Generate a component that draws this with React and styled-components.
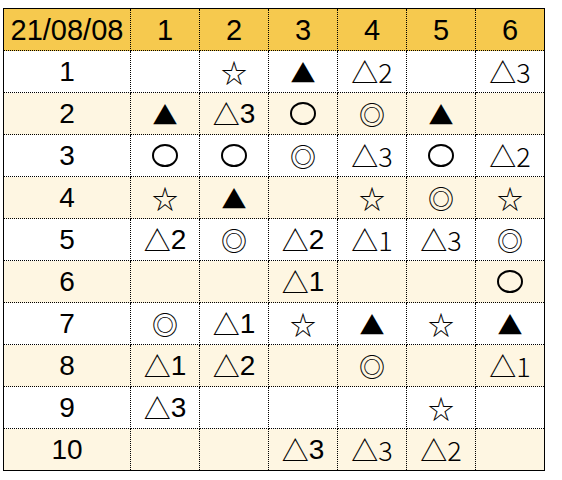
import React from "react";
import styled, { createGlobalStyle } from "styled-components";

const GlobalStyle = createGlobalStyle`
  body {
    margin: 0;
    background: #ffffff;
    font-family: "Liberation Sans", Arial, sans-serif;
  }
`;

const Page = styled.div`
  padding: 8px 0 0 3px;
`;

const Table = styled.table`
  border-collapse: collapse;
  table-layout: fixed;
  width: 542px;
  border: 1px solid #000;
`;

const Row = styled.tr`
  height: 42px;
  background: ${(p) => (p.$head ? "#f6c94e" : p.$alt ? "#fef6e2" : "#ffffff")};
`;

const Cell = styled.td`
  width: ${(p) => (p.$first ? "126px" : "auto")};
  border: 1px dotted #000;
  padding: 0;
  text-align: center;
  vertical-align: middle;
  font-size: 28px;
  line-height: 28px;
  color: #000;
  white-space: nowrap;
`;

const HeadCell = styled(Cell).attrs({ as: "th" })`
  font-weight: normal;
  font-size: 29px;
`;

const symSize = { "◎": "26px", "☆": "26px", "▲": "25px", "△": "27px" };

const Sym = styled.span`
  display: inline-block;
  font-family: "Noto Sans CJK JP", sans-serif;
  font-size: ${(p) => symSize[p.$ch] || "27px"};
  line-height: 28px;
  vertical-align: top;
`;

const Oval = styled.span`
  display: inline-block;
  box-sizing: border-box;
  width: 26px;
  height: 23px;
  border: 2px solid #000;
  border-radius: 50%;
  vertical-align: middle;
  margin-top: -3px;
`;

const Num = styled.span`
  display: inline-block;
  vertical-align: top;
  line-height: 28px;
  font-family: ${(p) =>
    p.$small ? '"Noto Sans CJK JP", sans-serif' : '"Liberation Sans", Arial, sans-serif'};
  font-size: ${(p) => (p.$small ? "27px" : "28px")};
  font-weight: ${(p) => (p.$small ? 300 : 400)};
`;

// t = triangle with big digit, s = triangle with small digit
const rows = [
  ["", "☆", "▲", "s2", "", "s3"],
  ["▲", "t3", "○", "◎", "▲", ""],
  ["○", "○", "◎", "s3", "○", "s2"],
  ["☆", "▲", "", "☆", "◎", "☆"],
  ["t2", "◎", "t2", "s1", "s3", "◎"],
  ["", "", "t1", "", "", "○"],
  ["◎", "t1", "☆", "▲", "☆", "▲"],
  ["t1", "t2", "", "◎", "", "s1"],
  ["t3", "", "", "", "☆", ""],
  ["", "", "t3", "s3", "s2", ""],
];

const Mark = ({ v }) => {
  if (!v) return null;
  if (v[0] === "t" || v[0] === "s") {
    return (
      <>
        <Sym $ch="△">△</Sym>
        <Num $small={v[0] === "s"}>{v.slice(1)}</Num>
      </>
    );
  }
  if (v === "○") return <Oval title="○" />;
  return <Sym $ch={v}>{v}</Sym>;
};

const App = () => {
  return (
    <Page>
      <GlobalStyle />
      <Table>
        <thead>
          <Row $head>
            <HeadCell $first>21/08/08</HeadCell>
            {[1, 2, 3, 4, 5, 6].map((n) => (
              <HeadCell key={n}>{n}</HeadCell>
            ))}
          </Row>
        </thead>
        <tbody>
          {rows.map((r, i) => (
            <Row key={i} $alt={i % 2 === 1}>
              <Cell $first>{i + 1}</Cell>
              {r.map((v, j) => (
                <Cell key={j}>
                  <Mark v={v} />
                </Cell>
              ))}
            </Row>
          ))}
        </tbody>
      </Table>
    </Page>
  );
};

export default App;
